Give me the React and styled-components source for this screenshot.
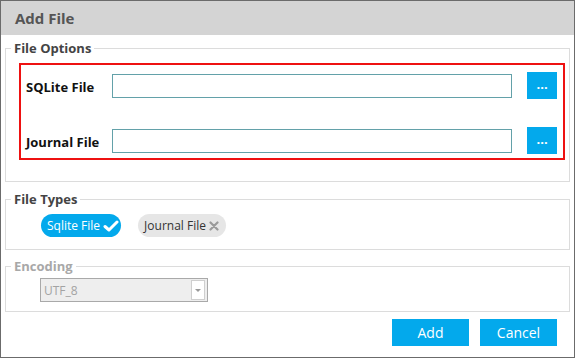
import React from 'react'
import styled, { createGlobalStyle } from 'styled-components'

const Global = createGlobalStyle`
  html, body { margin: 0; padding: 0; background: #fff; }
  * { box-sizing: border-box; }
  body { font-family: "Open Sans", "Noto Sans", sans-serif; }
`

const Window = styled.div`
  width: 575px;
  height: 358px;
  border: 1px solid #6b6b6b;
  display: flex;
  flex-direction: column;
  background: #fff;
`
const Header = styled.div`
  height: 34px;
  background: #d4d4d4;
  display: flex;
  align-items: center;
  padding-left: 14px;
  font-size: 15px;
  font-weight: 700;
  color: #555;
`
const Body = styled.div`
  padding: 0 4px;
  display: flex;
  flex-direction: column;
`
const Group = styled.fieldset`
  margin: ${p => p.$top}px 0 0 0;
  padding: 0 4px ${p => p.$bottom}px 0;
  border: 1px solid #dcdcdc;
  min-width: 0;
`
const Legend = styled.legend`
  margin-left: 5px;
  padding: 0 3px;
  font-size: 13px;
  line-height: 18px;
  font-weight: 700;
  color: ${p => (p.$disabled ? '#a8a8a8' : '#444')};
`
const Highlight = styled.div`
  margin: 6px 0 0 13px;
  border: 2px solid #ee1111;
  padding: 7px 6px 4px 5px;
  display: flex;
  flex-direction: column;
  gap: 28px;
`
const Row = styled.div`
  display: flex;
  align-items: center;
  height: 27px;
`
const Label = styled.div`
  width: 86px;
  font-size: 13px;
  font-weight: 700;
  color: #111;
  padding-top: 2px;
`
const TextInput = styled.input`
  width: 401px;
  height: 24px;
  border: 1px solid #63a1a9;
  outline: none;
  margin-right: 15px;
  font-family: inherit;
`
const BrowseButton = styled.button`
  width: 30px;
  height: 27px;
  border: none;
  background: #03a9ec;
  color: #fff;
  font-size: 13px;
  font-weight: 700;
  padding: 0 0 3px 0;
  line-height: 1;
  font-family: inherit;
`
const Chips = styled.div`
  margin: 6px 0 0 35px;
  display: flex;
  gap: 17px;
`
const Chip = styled.div`
  height: 23px;
  border-radius: 12px;
  display: flex;
  align-items: center;
  gap: 3px;
  padding: 0 ${p => (p.$on ? '2px' : '7px')} 0 ${p => (p.$on ? '6px' : '6px')};
  background: ${p => (p.$on ? '#03a9ec' : '#e6e6e6')};
  color: ${p => (p.$on ? '#fff' : '#333')};
  font-size: 12px;
`
const Select = styled.div`
  margin: 3px 0 0 34px;
  width: 168px;
  height: 24px;
  border: 1px solid #a9a9a9;
  background: #eeeeee;
  display: flex;
  align-items: center;
  justify-content: space-between;
  padding: 0 2px 0 3px;
  font-size: 12px;
  color: #a3a3a3;
`
const Arrow = styled.div`
  width: 14px;
  height: 20px;
  background: #fff;
  border: 1px solid #cfcfcf;
  display: flex;
  align-items: center;
  justify-content: center;
  &::after {
    content: '';
    border-left: 3px solid transparent;
    border-right: 3px solid transparent;
    border-top: 3px solid #999;
  }
`
const Footer = styled.div`
  margin-top: 7px;
  padding-right: 13px;
  display: flex;
  justify-content: flex-end;
  gap: 11px;
`
const ActionButton = styled.button`
  width: 77px;
  height: 27px;
  border: none;
  background: #03a9ec;
  color: #fff;
  font-size: 14px;
  font-family: inherit;
  padding: 0;
`

const Check = () => (
  <svg width="16" height="14" viewBox="0 0 16 14">
    <path d="M2 7.5 L6 11 L14 3" fill="none" stroke="#fff" strokeWidth="3" strokeLinecap="round" strokeLinejoin="round" />
  </svg>
)

const Cross = () => (
  <svg width="10" height="10" viewBox="0 0 10 10">
    <path d="M1.5 1.5 L8.5 8.5 M8.5 1.5 L1.5 8.5" stroke="#9a9a9a" strokeWidth="2.2" strokeLinecap="round" />
  </svg>
)

const App = () => {
  return (
    <Window>
      <Global />
      <Header>Add File</Header>
      <Body>
        <Group $top={4} $bottom={21}>
          <Legend>File Options</Legend>
          <Highlight>
            <Row>
              <Label>SQLite File</Label>
              <TextInput />
              <BrowseButton>...</BrowseButton>
            </Row>
            <Row>
              <Label>Journal File</Label>
              <TextInput />
              <BrowseButton>...</BrowseButton>
            </Row>
          </Highlight>
        </Group>
        <Group $top={8} $bottom={12}>
          <Legend>File Types</Legend>
          <Chips>
            <Chip $on>Sqlite File<Check /></Chip>
            <Chip>Journal File<Cross /></Chip>
          </Chips>
        </Group>
        <Group $top={7} $bottom={9}>
          <Legend $disabled>Encoding</Legend>
          <Select>
            UTF_8
            <Arrow />
          </Select>
        </Group>
        <Footer>
          <ActionButton>Add</ActionButton>
          <ActionButton>Cancel</ActionButton>
        </Footer>
      </Body>
    </Window>
  )
}

export default App
